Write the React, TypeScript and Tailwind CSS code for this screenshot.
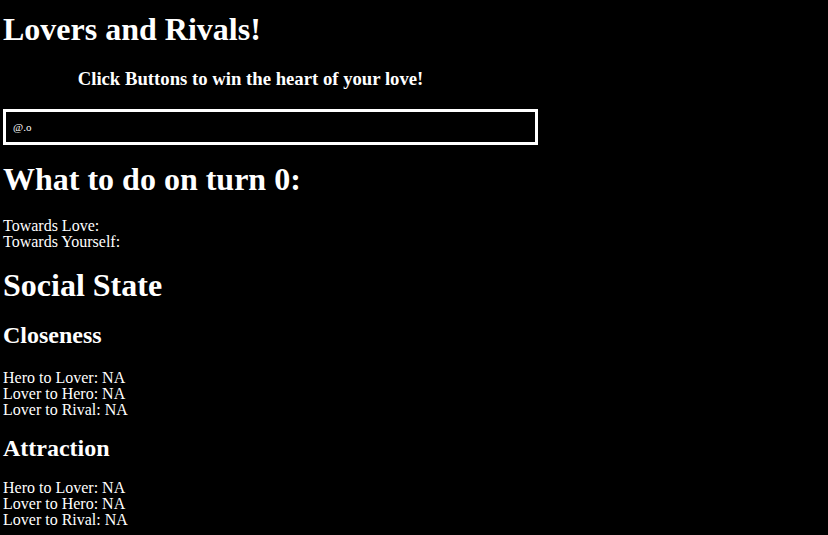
const relations = ['Hero to Lover: NA', 'Lover to Hero: NA', 'Lover to Rival: NA'];

const StateLines = ({ className }: { className: string }) => (
  <div className={`text-[16px] leading-[16px] ${className}`}>
    {relations.map((line) => (
      <div key={line}>{line}</div>
    ))}
  </div>
);

export default function App() {
  return (
    <div className="min-h-screen bg-black text-white pl-[3px] pt-[11px] pb-4 font-['Liberation_Serif',_'Times_New_Roman',_serif]">
      <h1 className="text-[32px] leading-[37px] font-bold">Lovers and Rivals!</h1>
      <h3 className="mt-[20px] w-[495px] text-center text-[18.72px] leading-[22px] font-bold">
        Click Buttons to win the heart of your love!
      </h3>

      <div className="mt-[19px] w-[535px] h-[36px] border-[3px] border-white flex items-center pl-[7px] text-[11px] leading-none">
        @.o
      </div>

      <h1 className="mt-[16px] text-[32px] leading-[37px] font-bold">What to do on turn 0:</h1>
      <div className="mt-[20px] text-[16px] leading-[16px]">
        <div>Towards Love:</div>
        <div>Towards Yourself:</div>
      </div>

      <h1 className="mt-[17px] text-[32px] leading-[37px] font-bold">Social State</h1>
      <h2 className="mt-[17px] text-[24px] leading-[28px] font-bold">Closeness</h2>
      <StateLines className="mt-[21px]" />
      <h2 className="mt-[16px] text-[24px] leading-[28px] font-bold">Attraction</h2>
      <StateLines className="mt-[18px]" />
    </div>
  );
}
